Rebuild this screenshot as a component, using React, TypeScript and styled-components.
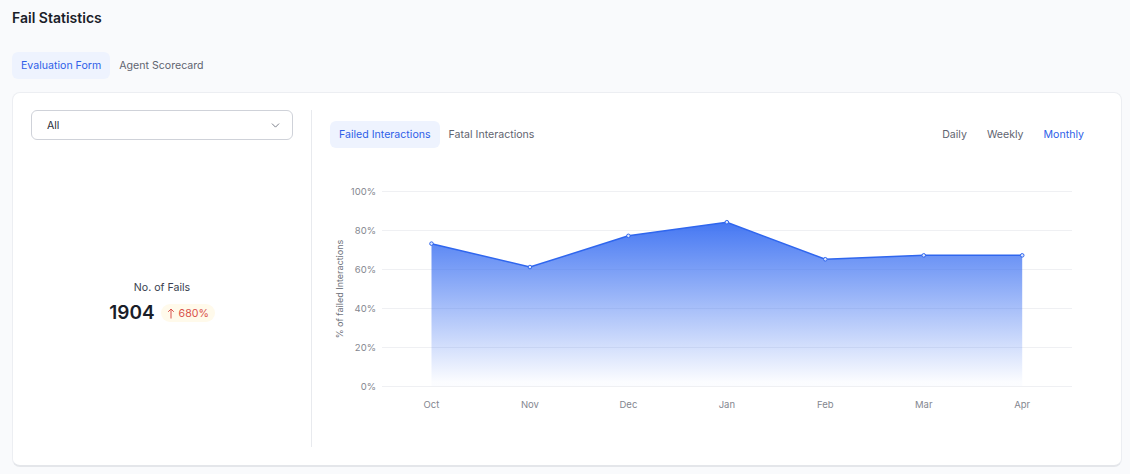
import * as React from 'react';
import styled, { createGlobalStyle } from 'styled-components';
import { ChevronDown } from 'lucide-react';

const GlobalStyle = createGlobalStyle`
  html, body {
    margin: 0;
    padding: 0;
    background: #f9fafc;
    font-family: Inter, "Liberation Sans", sans-serif;
  }
`;

const Page = styled.div`
  width: 1130px;
  height: 474px;
  overflow: hidden;
  box-sizing: border-box;
  padding: 8px 8px 7px 12px;
`;

const Title = styled.h1`
  margin: 0 0 25px;
  height: 19px;
  font-size: 14px;
  line-height: 19px;
  font-weight: 600;
  color: #1a1d29;
`;

const Tabs = styled.div`
  display: flex;
  align-items: center;
`;

const Tab = styled.button<{ $active?: boolean; $blue?: boolean }>`
  height: 27px;
  padding: 0 9px;
  border: 0;
  border-radius: 6px;
  font-family: inherit;
  font-size: 10.6px;
  font-weight: 400;
  white-space: nowrap;
  background: ${p => (p.$active ? '#eef3fe' : 'transparent')};
  color: ${p => (p.$active || p.$blue ? '#2f5fe8' : '#5f6470')};
`;

const Card = styled.div`
  display: flex;
  box-sizing: border-box;
  height: 375px;
  margin-top: 13px;
  padding: 17px 0 18px 18px;
  background: #fff;
  border: 1px solid #eceef2;
  border-bottom: 2px solid #e4e6ea;
  border-radius: 8px;
`;

const LeftPanel = styled.div`
  display: flex;
  flex-direction: column;
  width: 262px;
  padding-right: 18px;
  border-right: 1px solid #e8eaee;
`;

const Select = styled.div`
  display: flex;
  align-items: center;
  justify-content: space-between;
  box-sizing: border-box;
  height: 30px;
  padding: 0 10px 0 15px;
  border: 1px solid #cfd2d9;
  border-radius: 6px;
  font-size: 10.6px;
  color: #2a2d38;
`;

const Stat = styled.div`
  flex: 1;
  display: flex;
  flex-direction: column;
  align-items: center;
  padding-top: 141px;
`;

const StatLabel = styled.div`
  font-size: 10.6px;
  line-height: 14px;
  color: #3a3f50;
`;

const StatRow = styled.div`
  display: flex;
  align-items: center;
  gap: 6px;
  margin-top: 6px;
`;

const StatValue = styled.div`
  font-size: 19px;
  line-height: 24px;
  font-weight: 600;
  color: #1a1d29;
`;

const Badge = styled.div`
  display: flex;
  align-items: center;
  gap: 4px;
  height: 18px;
  padding: 0 6px;
  border-radius: 9px;
  background: #fffaeb;
  color: #d9504a;
  font-size: 10.6px;
`;

const RightPanel = styled.div`
  flex: 1;
  min-width: 0;
  padding: 11px 0 0 18px;
`;

const TopRow = styled.div`
  display: flex;
  align-items: center;
  justify-content: space-between;
  padding-right: 28px;
`;

const Periods = styled.div`
  display: flex;
  gap: 2px;
`;

const Chart = styled.svg`
  display: block;
  margin-top: 22px;
`;

const Y_TICKS = [100, 80, 60, 40, 20, 0];
const POINTS: [string, number][] = [
  ['Oct', 73],
  ['Nov', 61],
  ['Dec', 77],
  ['Jan', 84],
  ['Feb', 65],
  ['Mar', 67],
  ['Apr', 67],
];

// svg starts at page coords (330, 170)
const plotY = (v: number) => 216 - v * 1.95;
const plotX = (i: number) => 101.5 + i * 98.45;

function FailChart() {
  const line = POINTS.map(([, v], i) => `${plotX(i)},${plotY(v)}`).join(' ');
  const area = `${plotX(0)},${plotY(0)} ${line} ${plotX(6)},${plotY(0)}`;
  return (
    <Chart width="774" height="260" viewBox="0 0 774 260">
      <defs>
        <linearGradient id="failFill" gradientUnits="userSpaceOnUse" x1="0" y1="50" x2="0" y2="212">
          <stop offset="0" stopColor="#3f73f2" stopOpacity="0.98" />
          <stop offset="1" stopColor="#3f73f2" stopOpacity="0.02" />
        </linearGradient>
      </defs>
      {Y_TICKS.map(t => (
        <g key={t}>
          <line x1="52" x2="742" y1={plotY(t) + 0.5} y2={plotY(t) + 0.5} stroke="#eff0f3" />
          <text x="46" y={plotY(t) + 4} textAnchor="end" fontSize="9.5" fill="#84878f">
            {t}%
          </text>
        </g>
      ))}
      <polygon points={area} fill="url(#failFill)" />
      <polyline points={line} fill="none" stroke="#2f66ee" strokeWidth="1.5" />
      {POINTS.map(([m, v], i) => (
        <g key={m}>
          <circle cx={plotX(i)} cy={plotY(v)} r="1.8" fill="#dbe6ff" stroke="#2f66ee" strokeWidth="1" />
          <text x={plotX(i)} y="238" textAnchor="middle" fontSize="9.5" fill="#84878f">
            {m}
          </text>
        </g>
      ))}
      <text
        transform="translate(13 119) rotate(-90)"
        textAnchor="middle"
        fontSize="9"
        fill="#6e717a"
      >
        % of failed Interactions
      </text>
    </Chart>
  );
}

function UpArrow() {
  return (
    <svg width="8" height="11" viewBox="0 0 8 11" fill="none" stroke="currentColor" strokeWidth="1">
      <path d="M4 10.5V1M1.2 3.8 4 1l2.8 2.8" />
    </svg>
  );
}

export default function App() {
  return (
    <Page>
      <GlobalStyle />
      <Title>Fail Statistics</Title>
      <Tabs>
        <Tab $active>Evaluation Form</Tab>
        <Tab>Agent Scorecard</Tab>
      </Tabs>
      <Card>
        <LeftPanel>
          <Select>
            All
            <ChevronDown size={13} color="#5f6470" strokeWidth={1.5} />
          </Select>
          <Stat>
            <StatLabel>No. of Fails</StatLabel>
            <StatRow>
              <StatValue>1904</StatValue>
              <Badge>
                <UpArrow />
                680%
              </Badge>
            </StatRow>
          </Stat>
        </LeftPanel>
        <RightPanel>
          <TopRow>
            <Tabs>
              <Tab $active>Failed Interactions</Tab>
              <Tab>Fatal Interactions</Tab>
            </Tabs>
            <Periods>
              <Tab>Daily</Tab>
              <Tab>Weekly</Tab>
              <Tab $blue>Monthly</Tab>
            </Periods>
          </TopRow>
          <FailChart />
        </RightPanel>
      </Card>
    </Page>
  );
}
